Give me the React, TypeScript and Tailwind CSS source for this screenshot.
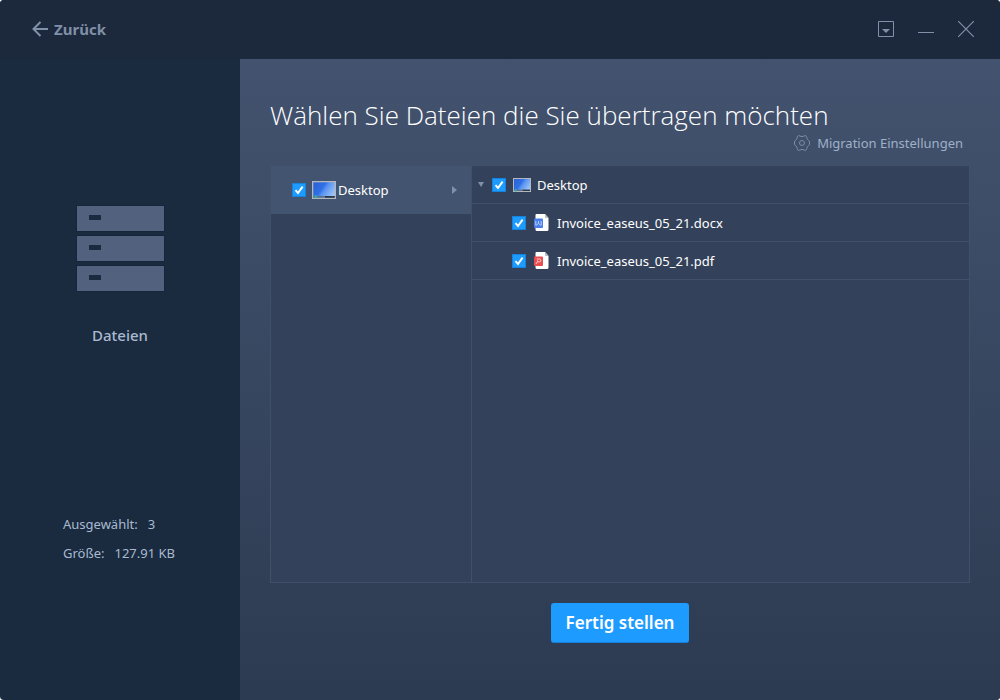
import { useId, useState } from "react";
import type { ReactNode } from "react";

function Check({ label, checked, onChange }: { label: string; checked: boolean; onChange: () => void }) {
  return (
    <span className="grid size-3.5 shrink-0">
      <input
        type="checkbox"
        aria-label={label}
        checked={checked}
        onChange={onChange}
        className="peer col-start-1 row-start-1 size-3.5 appearance-none border border-[#1583dc] bg-[#33425a] checked:bg-[#1e9bff]"
      />
      <svg
        viewBox="0 0 14 14"
        className="pointer-events-none invisible col-start-1 row-start-1 size-3.5 peer-checked:visible"
        fill="none"
        stroke="#fff"
        strokeWidth="1.9"
      >
        <path d="M3.5 7.2 6 10 10.6 3.6" />
      </svg>
    </span>
  );
}

function DesktopIcon({ className }: { className: string }) {
  const id = useId();
  return (
    <svg viewBox="0 0 24 18" className={className} preserveAspectRatio="none" aria-hidden="true">
      <defs>
        <linearGradient id={id} x1="0" y1="0.2" x2="1" y2="0.7">
          <stop offset="0" stopColor="#2c62d4" />
          <stop offset="0.4" stopColor="#2f70e6" />
          <stop offset="0.55" stopColor="#5a93f0" />
          <stop offset="1" stopColor="#9cc4fa" />
        </linearGradient>
      </defs>
      <rect width="24" height="18" fill="#b4b8be" />
      <rect x="1.300" y="1.300" width="21.400" height="15.400" fill={`url(#${id})`} />
      <path d="M1.300 15h21.400v1.700H1.300z" fill="#5a7086" />
      <path d="M13 15h9.700v1.700H13z" fill="#2b3848" />
      <circle cx="3.800" cy="15.600" r="1.600" fill="#39a7a5" />
    </svg>
  );
}

function FileIcon({ kind }: { kind: "docx" | "pdf" }) {
  return (
    <svg viewBox="0 0 15 17" className="h-[17px] w-[15px] shrink-0" fill="none" aria-hidden="true">
      <path d="M2.500 0h8.500l3.500 4v11.500a1.500 1.500 0 0 1-1.500 1.500H3a1.500 1.500 0 0 1-1.500-1.500V1a1 1 0 0 1 1-1z" fill="#fff" />
      <path d="M11 0l3.500 4H12a1 1 0 0 1-1-1z" fill="#b9bec7" />
      <rect y="4.500" width="9" height="9.500" rx="1" fill={kind === "docx" ? "#4b7fe8" : "#ea4f4f"} />
      {kind === "docx" ? (
        <path d="M1.800 7v4.200h.7l2-2 2 2h.7V7M4.500 7v2" stroke="#c6d7fb" strokeWidth=".9" />
      ) : (
        <path d="M2 12 3.500 9.500M2.800 7h3a1 1 0 0 1 1 1v.8a1 1 0 0 1-1 1H3.500V8.300" stroke="#ffd0d0" strokeWidth=".9" />
      )}
    </svg>
  );
}

function Row({ children, className }: { children: ReactNode; className: string }) {
  return (
    <li className={`flex h-[38px] items-center border-b border-[#40506b] text-[13px] text-white ${className}`}>
      {children}
    </li>
  );
}

export default function App() {
  const [checked, setChecked] = useState({ desktop: true, docx: true, pdf: true });
  const toggle = (key: "desktop" | "docx" | "pdf") => setChecked((c) => ({ ...c, [key]: !c[key] }));

  return (
    <div className="min-h-screen bg-white font-['Noto_Sans','Open_Sans',sans-serif]">
      <div className="flex min-h-screen flex-col overflow-hidden rounded-[4px] bg-[#1a2a3f]">
        <header className="flex h-[59px] items-center justify-between bg-[#1c283b] pr-[26px] pb-px pl-8 text-[#8090a8]">
          <button type="button" className="flex items-center gap-1.5 text-[15px] font-bold">
            <svg viewBox="0 0 16 16" className="size-4" fill="none" stroke="currentColor" strokeWidth="2" aria-hidden="true">
              <path d="M1.500 8H16M8.500 1 1.500 8l7 7" />
            </svg>
            Zurück
          </button>
          <div className="flex items-center gap-6">
            <button type="button" aria-label="Menü">
              <svg viewBox="0 0 16 16" className="size-4" aria-hidden="true">
                <path d="M.5.5h15v15H.5z" fill="none" stroke="currentColor" />
                <path d="M4 8h8l-4 4z" fill="currentColor" />
              </svg>
            </button>
            <button type="button" aria-label="Minimieren">
              <svg viewBox="0 0 16 16" className="size-4" aria-hidden="true">
                <path d="M0 11.500h16" stroke="currentColor" />
              </svg>
            </button>
            <button type="button" aria-label="Schließen">
              <svg viewBox="0 0 16 16" className="size-4" aria-hidden="true">
                <path d="M0 0l16 16M16 0 0 16" stroke="currentColor" strokeWidth="1.2" />
              </svg>
            </button>
          </div>
        </header>

        <div className="flex flex-1">
          <aside className="flex w-60 shrink-0 flex-col items-center justify-between pt-[145px] pb-[137px] text-[#a9bad0]">
            <div className="flex flex-col items-center gap-8">
              <svg viewBox="0 0 91 89" className="h-[89px] w-[91px]" aria-hidden="true">
                {[2, 32, 62].map((y) => (
                  <g key={y}>
                    <rect x="1" y={y - 1} width="89" height="27" fill="#17253a" />
                    <rect x="2" y={y} width="87" height="25" fill="#52627e" />
                    <rect x="14" y={y + 9} width="12" height="5" fill="#1a2a3f" />
                  </g>
                ))}
              </svg>
              <h2 className="text-[15px] leading-5 font-medium">Dateien</h2>
            </div>
            <dl className="flex w-full flex-col gap-[9px] pl-[63px] text-[13px] leading-5">
              <div className="flex gap-2.5">
                <dt>Ausgewählt:</dt>
                <dd>3</dd>
              </div>
              <div className="flex gap-2.5">
                <dt>Größe:</dt>
                <dd>127.91 KB</dd>
              </div>
            </dl>
          </aside>

          <main className="flex min-w-0 flex-1 flex-col bg-linear-to-b from-[#43536f] to-[#2c3b51] px-[30px] pt-9 pb-[57px]">
            <h1 className="font-['Open_Sans','Noto_Sans',sans-serif] text-[26px] leading-10 font-light text-white">
              Wählen Sie Dateien die Sie übertragen möchten
            </h1>
            <button type="button" className="mr-[7px] -mt-0.5 flex items-center gap-[7px] self-end text-[13px] leading-5 text-[#9fb0c8]">
              <svg viewBox="0 0 16 16" className="size-4" fill="none" stroke="#7d8da8" aria-hidden="true">
                <path d="M4.200.7Q5 .3 5.800 1q2.200 1.200 4.400 0 .8-.7 1.600-.3.900.5.900 1.500.1 2.300 2 3.300.8.500.8 1.500v2q0 1-.8 1.500-1.900 1-2 3.300 0 1-.9 1.500-.8.400-1.600-.3-2.200-1.200-4.400 0-.8.700-1.600.3-.9-.5-.9-1.500-.1-2.300-2-3.300Q.5 10 .5 9V7q0-1 .8-1.500 1.900-1 2-3.300 0-1 .9-1.500z" />
                <circle cx="8" cy="8" r="2.500" />
              </svg>
              Migration Einstellungen
            </button>

            <section className="mt-3 flex flex-1 border border-[#40506b] bg-[#33425a]">
              <nav className="w-[201px] shrink-0 border-r border-[#40506b]">
                <div className="flex h-12 items-center bg-[#435470] pr-3.5 pl-[21px] text-[13px] text-white">
                  <Check label="Ordner Desktop" checked={checked.desktop} onChange={() => toggle("desktop")} />
                  <DesktopIcon className="ml-1.5 h-[18px] w-6" />
                  <a href="#desktop" className="ml-0.5 flex-1 pt-0.5">Desktop</a>
                  <svg viewBox="0 0 5 8" className="h-2 w-[5px]" aria-hidden="true">
                    <path d="M0 0l5 4-5 4z" fill="#8090a8" />
                  </svg>
                </div>
              </nav>
              <ul id="desktop" className="min-w-0 flex-1">
                <Row className="pl-1.5">
                  <button type="button" aria-label="Desktop einklappen" className="mr-2">
                    <svg viewBox="0 0 6 5" className="h-[5px] w-1.5" aria-hidden="true">
                      <path d="M0 0h6L3 5z" fill="#8090a8" />
                    </svg>
                  </button>
                  <Check label="Desktop" checked={checked.desktop} onChange={() => toggle("desktop")} />
                  <DesktopIcon className="mr-1.5 ml-[7px] h-3.5 w-[18px]" />
                  <span className="pt-[3px]">Desktop</span>
                </Row>
                <Row className="gap-2 pl-10">
                  <Check label="Invoice_easeus_05_21.docx" checked={checked.docx} onChange={() => toggle("docx")} />
                  <FileIcon kind="docx" />
                  <span className="pt-[3px]">Invoice_easeus_05_21.docx</span>
                </Row>
                <Row className="gap-2 pl-10">
                  <Check label="Invoice_easeus_05_21.pdf" checked={checked.pdf} onChange={() => toggle("pdf")} />
                  <FileIcon kind="pdf" />
                  <span className="pt-[3px]">Invoice_easeus_05_21.pdf</span>
                </Row>
              </ul>
            </section>

            <button type="button" className="mt-5 h-10 self-center rounded-[3px] border-b border-[#1880d8] bg-[#1e9bff] px-[15px] text-[17px] font-semibold text-white">
              Fertig stellen
            </button>
          </main>
        </div>
      </div>
    </div>
  );
}
